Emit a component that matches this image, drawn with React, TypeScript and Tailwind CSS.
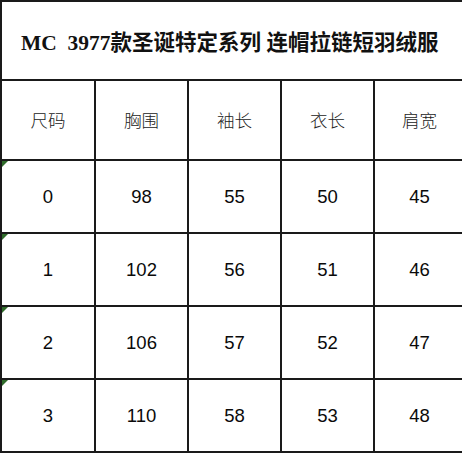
import React from "react";

const headers = ["尺码", "胸围", "袖长", "衣长", "肩宽"];

const rows = [
  ["0", "98", "55", "50", "45"],
  ["1", "102", "56", "51", "46"],
  ["2", "106", "57", "52", "47"],
  ["3", "110", "58", "53", "48"],
];

const gridCols = "grid grid-cols-[92px_93px_93px_93px_91px]";

export default function App() {
  return (
    <div className="w-[462px] h-[454px] bg-white overflow-hidden">
      <div className="w-[462px] border-l-2 border-b-2 border-[#1a1a1a]">
        {/* title row */}
        <div className="h-[79px] border-t-2 border-[#1a1a1a] flex items-center pl-[19px] pt-[6px] whitespace-nowrap text-[21.5px] font-bold text-[#111] [font-family:'Liberation_Serif','Noto_Sans_CJK_SC',serif]">
          MC&nbsp;&nbsp;3977款圣诞特定系列&nbsp;连帽拉链短羽绒服
        </div>

        {/* header row */}
        <div className={`${gridCols} h-[80px]`}>
          {headers.map((h, i) => (
            <div
              key={h}
              className={`border-t-2 border-[#1a1a1a] flex items-center justify-center text-[17.5px] font-light text-[#222] [font-family:'Noto_Sans_CJK_SC',sans-serif] ${
                i > 0 ? "border-l-2" : ""
              }`}
            >
              {h}
            </div>
          ))}
        </div>

        {/* data rows */}
        {rows.map((row, r) => (
          <div key={r} className={`${gridCols} h-[73px]`}>
            {row.map((cell, i) => (
              <div
                key={i}
                className={`relative border-t-2 border-[#1a1a1a] flex items-center justify-center text-[18.5px] text-[#0a0a0a] [font-family:'Liberation_Sans',sans-serif] ${
                  i > 0 ? "border-l-2" : ""
                }`}
              >
                {i === 0 && (
                  <span className="absolute left-0 top-0 w-0 h-0 border-t-[6px] border-r-[6px] border-t-[#2f6b2a] border-r-transparent" />
                )}
                {cell}
              </div>
            ))}
          </div>
        ))}
      </div>
    </div>
  );
}
